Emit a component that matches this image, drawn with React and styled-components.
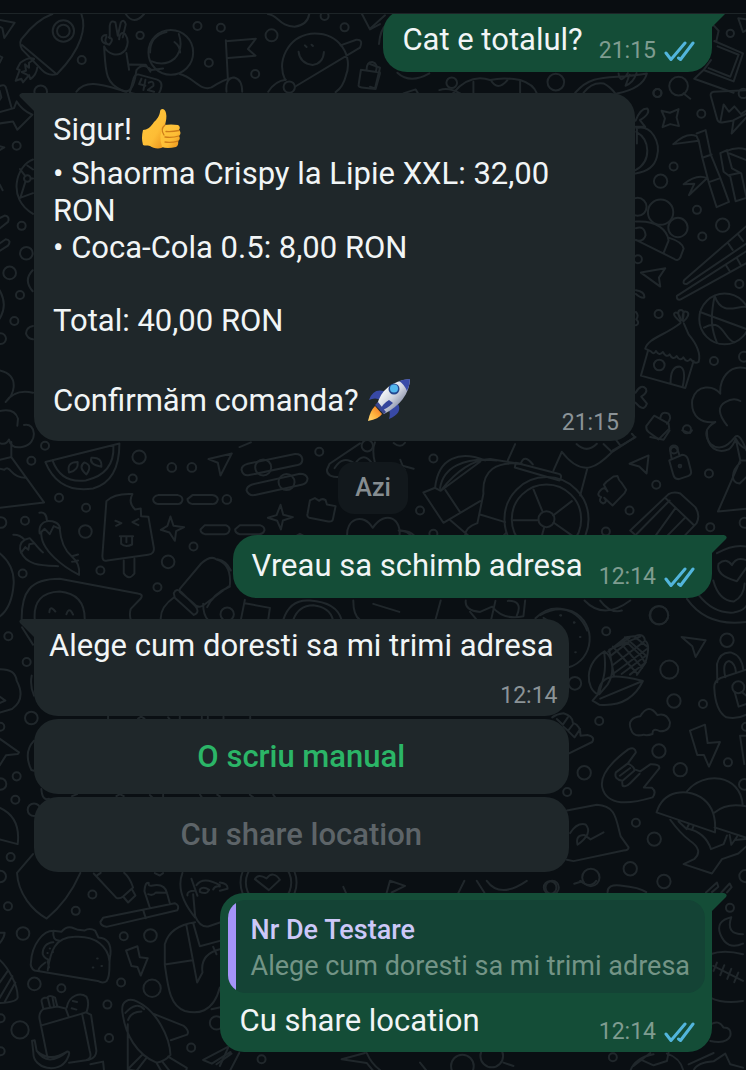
import React from 'react';
import styled, { createGlobalStyle, css } from 'styled-components';

const GlobalStyle = createGlobalStyle`
  *, *::before, *::after { box-sizing: border-box; }
  body {
    margin: 0;
    background: #0a0f13;
    color: #f1f5f6;
    font-family: Roboto, "Noto Sans", sans-serif;
  }
`;

const palette = {
  page: '#0a0f13',
  incoming: '#1f272a',
  outgoing: '#144d37',
  doodle: '#20272b',
};

const Screen = styled.div`
  position: relative;
  min-height: 100vh;
  overflow: hidden;
  background: ${palette.page};
`;

const WallpaperSvg = styled.svg`
  position: absolute;
  inset: 0;
  width: 100%;
  height: 100%;
  fill: none;
  stroke: ${palette.doodle};
  stroke-width: 6;
  stroke-linecap: round;
  stroke-linejoin: round;
`;

const TopBar = styled.header`
  position: relative;
  z-index: 2;
  height: 14px;
  background: #090d11;
  border-bottom: 1px solid #1d2427;
`;

const Conversation = styled.main`
  position: relative;
  z-index: 1;
  display: flex;
  flex-direction: column;
  gap: 21px;
  margin-top: -5px;
  padding: 0 34px 19px;
`;

const bubbleSurface = css`
  background: ${({ $out }) => ($out ? palette.outgoing : palette.incoming)};
  border-radius: ${({ $out }) => ($out ? '24px 0 24px 24px' : '0 24px 24px 24px')};
`;

const Bubble = styled.article`
  ${bubbleSurface}
  position: relative;
  display: flex;
  justify-content: space-between;
  align-self: ${({ $out }) => ($out ? 'flex-end' : 'flex-start')};
  gap: ${({ $out }) => ($out ? '16px' : '0')};
  max-width: calc(100% - 77px);
  padding: ${({ $out }) => ($out ? '12px 17px 9px 19px' : '10px 16px 6px 19px')};
`;

const StackedBubble = styled(Bubble)`
  flex-direction: column;
  gap: 2px;
  max-width: 100%;
  align-self: ${({ $out }) => ($out ? 'flex-end' : 'stretch')};
  padding: ${({ $out }) => ($out ? '7px 7px 7px 8px' : '8px 11px 8px 15px')};
`;

const TailSvg = styled.svg`
  position: absolute;
  top: 0;
  ${({ $out }) => ($out ? 'left: 100%;' : 'right: 100%;')}
  width: 15px;
  height: 18px;
  fill: ${({ $out }) => ($out ? palette.outgoing : palette.incoming)};
`;

const Text = styled.p`
  margin: 0;
  font-size: 31px;
  line-height: 37px;
`;

const PromptText = styled(Text)`
  padding-right: 4px;
`;

const EmojiLine = styled(Text)`
  display: flex;
  align-items: center;
  gap: 8px;
  height: 52px;
`;

const EmojiSvg = styled.svg`
  flex: none;
  width: 44px;
  height: 44px;
`;

const Items = styled.ul`
  margin: 0 0 36px;
  padding: 0;
  list-style: none;
  font-size: 31px;
  line-height: 37px;
`;

const Body = styled.div`
  min-width: 0;
  flex: 1;
  padding-bottom: 9px;
`;

const Total = styled(Text)`
  margin-bottom: 35px;
`;

const Meta = styled.footer`
  display: flex;
  align-items: center;
  align-self: flex-end;
  gap: 8px;
  flex: none;
  padding-top: 18px;
  font-size: 23px;
  line-height: 24px;
  color: ${({ $out }) => ($out ? '#7f9c90' : '#8b9397')};
`;

const TicksSvg = styled.svg`
  width: 31px;
  height: 21px;
  fill: none;
  stroke: #52b5dc;
  stroke-width: 3;
  stroke-linejoin: round;
  stroke-linecap: round;
`;

const DayChip = styled.div`
  align-self: center;
  padding: 12px 17px;
  border-radius: 16px;
  background: #12181c;
  color: #868d91;
  font-size: 25px;
  font-weight: 500;
  line-height: 28px;
`;

const Prompt = styled.section`
  display: flex;
  flex-direction: column;
  align-self: flex-start;
  gap: 3px;
`;

const ReplyButton = styled.button`
  height: 75px;
  border: 0;
  border-radius: 24px;
  background: ${palette.incoming};
  color: #2bb567;
  font: 500 31px/37px Roboto, "Noto Sans", sans-serif;
  cursor: pointer;

  &:disabled {
    color: #5d6468;
    cursor: default;
  }
`;

const Quote = styled.blockquote`
  position: relative;
  overflow: hidden;
  margin: 0;
  padding: 12px 15px 9px 23px;
  border-radius: 18px;
  background: #144335;

  &::before {
    content: "";
    position: absolute;
    inset: 0 auto 0 0;
    width: 8px;
    background: #a594f8;
  }
`;

const QuoteAuthor = styled.cite`
  display: block;
  color: #cdc8f8;
  font-size: 27px;
  font-style: normal;
  font-weight: 500;
  line-height: 36px;
`;

const QuoteText = styled.p`
  margin: 0;
  color: #739486;
  font-size: 27px;
  line-height: 36px;
`;

const ReplyRow = styled.div`
  display: flex;
  justify-content: space-between;
  padding: 7px 10px 1px 12px;
`;

const BubbleTail = ({ out }) => (
  <TailSvg $out={out} viewBox="0 0 15 18" aria-hidden="true">
    <path d={out ? 'M0 0H12Q16 1 14 4L0 18Z' : 'M15 0H3Q-1 1 1 4L15 18Z'} />
  </TailSvg>
);

const Ticks = () => (
  <TicksSvg viewBox="0 0 31 21" role="img" aria-label="Citit">
    <path d="M2 12L7 18.500L21 2M14.500 17L16.500 18.500L29 2" />
  </TicksSvg>
);

const Stamp = ({ time, out }) => (
  <Meta $out={out}>
    <time>{time}</time>
    {out && <Ticks />}
  </Meta>
);

const ThumbsUp = () => (
  <EmojiSvg viewBox="0 0 44 44" role="img" aria-label="Deget ridicat">
    <defs>
      <linearGradient id="skin" x1="0" y1="0" x2="1" y2="1">
        <stop offset="0" stopColor="#ffc83e" />
        <stop offset="0.6" stopColor="#fdbd35" />
        <stop offset="1" stopColor="#e88d18" />
      </linearGradient>
    </defs>
    <path d="M3 23C7 23 11 20 14 15C17 12 19 10 20 5C20 1 25 1 26 6C27 10 26 14 25 18L25 38C22 43 14 42 10 39C7 38 5 39 3 38Q1 31 3 23Z" fill="url(#skin)" />
    <path d="M24 18Q31 17 38 18Q41 20 39 23Q42 26 39 29Q41 32 38 34Q39 38 36 40Q27 42 22 40Q18 28 24 18Z" fill="url(#skin)" />
    <path d="M26 24.500Q32 25 39 23.500M25 30Q32 31 39 29M25 35Q31 36 38 34M25 18Q20 22 24 28" fill="none" stroke="#cf7d18" strokeWidth="1.300" strokeLinecap="round" />
  </EmojiSvg>
);

const Rocket = () => (
  <EmojiSvg viewBox="0 0 44 44" role="img" aria-label="Rachetă">
    <defs>
      <linearGradient id="hull" x1="0.2" y1="0.2" x2="0.8" y2="0.8">
        <stop offset="0" stopColor="#ffffff" />
        <stop offset="0.5" stopColor="#cfd3de" />
        <stop offset="1" stopColor="#777f9c" />
      </linearGradient>
      <linearGradient id="flame" x1="1" y1="0" x2="0" y2="1">
        <stop offset="0" stopColor="#f06b1d" />
        <stop offset="0.6" stopColor="#ffb740" />
        <stop offset="1" stopColor="#ffd879" />
      </linearGradient>
    </defs>
    <path d="M17 13Q6 10 2 22Q8 19 14 22ZM31 26Q36 35 22 41Q24 35 21 30Z" fill="#3849a5" />
    <path d="M8 28L15 36Q12 41 1 43Q3 33 8 28Z" fill="url(#flame)" />
    <path d="M10 27Q16 4 43 1Q42 23 17 36Z" fill="url(#hull)" />
    <path d="M32 3Q38 1 43 1Q43 7 40 13Q37 6 32 3Z" fill="#394ba8" />
    <path d="M8 27L17 36L19 34L11 24Z" fill="#3a468e" />
    <path d="M22 22Q15 26 13 33Q20 31 26 25Z" fill="#35459c" />
    <circle cx="27" cy="11" r="5.500" fill="#24478f" />
    <circle cx="27" cy="10.500" r="4" fill="#53b8ee" />
  </EmojiSvg>
);

/* Each patch holds doodles drawn at three times their size around an origin. */
const patches = [
  {
    x: 0, y: 0,
    dots: [[246, 180, 12], [421, 106, 11], [593, 78, 12], [663, 83, 12], [627, 188, 12], [766, 222, 12], [815, 106, 18], [974, 48, 12], [1034, 82, 12], [191, 93, 32], [191, 93, 19], [513, 157, 67], [123, 275, 19], [868, 261, 17], [51, 437, 12]],
    paths: [
      'M0 60L45 68L14 114L8 84L0 80M0 168L8 172L0 188',
      'M245 42C260 80 248 145 172 222Q145 230 125 208L67 148Q55 125 70 112Q110 60 158 42M67 135L170 222',
      'M103 176Q85 170 62 188L52 207L60 210L48 242L65 236L70 247L88 225L92 237Q110 225 113 202M103 178L88 188L88 203L76 193L79 212L66 216L82 224',
      'M330 115L330 77Q333 58 347 67L354 107L363 68Q373 55 378 73L369 112M320 105C300 105 303 126 318 131M327 112Q345 115 329 134Q311 130 320 110M358 118Q360 92 376 102Q391 124 377 150C355 174 325 163 313 139C318 210 315 250 366 270Q400 290 410 210Q430 186 455 210L490 205M380 159L388 209M388 193L438 194L452 215',
      'M415 223L470 238Q492 244 482 270L470 296L390 278L400 240Q404 222 415 223ZM425 236L418 252L437 257M437 239L431 270M447 248Q463 239 461 257L444 270L463 275',
      'M456 184Q495 200 525 175Q552 145 537 102M500 96Q450 108 451 157M524 126Q540 138 541 157M230 275C260 235 310 255 380 275M540 222C580 230 600 275 635 262Q670 238 700 232M678 121L684 235M678 124L768 116L744 147L767 167L685 174M680 275Q676 234 703 232Q727 237 727 275',
      'M378 42Q402 78 433 42M804 42C835 45 840 80 884 80Q923 75 928 42M856 240C830 185 862 112 932 101C1022 94 1060 172 1038 226Q1030 260 1007 276M805 275Q826 242 858 239M885 260L1080 143Q1091 117 1069 119L1022 136M896 155Q900 190 938 195Q970 190 972 156M915 136L920 141M935 134L939 138M1086 42L1110 88L1140 72',
      'M1083 209L1140 217M1083 209L1076 254Q1074 261 1085 262L1127 267L1140 220M1100 209Q1100 185 1117 186Q1135 190 1128 215',
      'M0 258Q17 250 20 266L35 321M0 272L5 292L0 300M0 370L40 364L53 389L98 344Q67 330 51 304L43 324L0 336',
    ],
  },
  {
    x: 370, y: 0,
    dots: [[557, 246, 25], [925, 258, 28], [861, 279, 12], [1080, 100, 11], [245, 248, 16]],
    paths: [
      'M0 86L45 46M27 132Q30 90 50 72M82 218Q120 253 178 220M0 260L15 265L30 203L0 192M100 280L137 268L150 290',
      'M208 270Q235 260 270 280M250 278Q300 220 360 240Q400 230 450 240Q490 252 500 280M310 245V278M450 240V278M362 240Q382 275 412 240',
      'M615 278C670 215 720 240 830 220Q818 265 740 280M640 278Q665 245 700 250Q720 260 735 280M745 220Q750 255 773 219M778 224L766 257Q790 248 799 219',
      'M1030 76L1045 92L1038 124M1104 55L1128 58M1104 55L1118 96L1128 90M1032 123L1118 160L1090 244L1000 210L1022 180M1042 139L1105 164L1080 230L1015 204M1000 210L972 236L1090 278M940 280L960 296',
    ],
  },
  {
    x: 540, y: 90,
    dots: [[352, 9, 12], [483, 71, 12], [400, 229, 12], [361, 273, 20], [470, 359, 12], [547, 405, 20], [486, 439, 12], [293, 507, 12], [597, 581, 12], [355, 671, 12], [521, 812, 12], [357, 824, 16], [440, 1017, 12], [361, 366, 38], [413, 412, 29], [553, 686, 76], [292, 350, 27], [611, 799, 15], [609, 10, 14], [401, 1077, 12]],
    paths: [
      'M364 62L389 68L415 57L409 82L416 108L390 102L367 111L374 85ZM286 92Q300 54 321 55Q333 69 299 90L315 110L286 110M288 114C335 102 362 158 350 200Q340 242 286 250M288 125C330 148 335 213 286 240M290 115V160',
      'M620 0L520 5Q508 8 512 20L530 85Q533 98 545 97L580 91M540 96L550 43L566 65L582 49L602 72L620 60M618 82L574 130L580 90L620 70',
      'M399 162Q440 125 469 138L475 152L399 162M469 130L496 120L511 192L540 263L566 335L529 351L506 279L486 203L475 150M486 203L514 193M506 276L540 264M430 282Q470 250 500 264L446 315L462 281L430 282M540 189L560 180L575 235L603 250L618 320M540 189L550 245L570 260L586 333L618 323M557 183Q590 168 618 178M568 190L618 210M565 255L600 248',
      'M287 394C350 390 381 420 385 451Q377 470 371 486M287 449L400 505Q412 515 420 502L430 475Q426 455 387 443M287 414Q313 405 316 435Q310 456 287 450M302 547L375 534L356 562L360 589ZM287 600Q315 605 312 622Q302 624 287 611M287 665Q297 675 288 687Q300 700 287 705',
      'M618 408L432 569Q425 583 440 581L618 460M618 483L410 617Q408 630 420 628L618 519M564 460L577 479M594 433L608 452M557 525L567 541M590 504L600 522',
      'M479 665L618 716M523 617C508 690 515 720 530 758M523 617C545 680 590 645 618 650M491 712C550 680 550 750 583 756',
      'M421 695Q393 672 405 667Q415 664 422 690Q406 660 422 659Q435 660 427 690Q426 657 440 665Q452 672 429 694M421 698C375 735 322 744 315 775L332 783Q342 795 347 782Q357 798 368 785Q378 804 388 792Q398 812 409 797Q420 815 429 801Q440 820 450 806Q462 822 475 815Q485 780 445 732L431 700M323 782L302 856L435 893L460 812M391 880Q390 827 419 829Q439 836 427 890',
      'M286 907Q303 879 317 895Q323 907 303 919L320 940Q313 960 298 949L286 937M342 976L318 1007Q317 1019 325 1025L355 1047L387 1015L385 1000ZM360 983Q364 960 385 970Q397 982 380 1000',
      'M618 834C565 820 537 868 540 910C520 885 470 880 456 928C450 980 485 1000 525 995M618 1080Q598 1025 584 1040Q544 1090 510 1060Q480 1020 525 995M560 1005Q520 955 555 935Q580 920 600 932M286 1040L218 1080',
    ],
  },
  {
    x: 0, y: 370,
    dots: [[136, 226, 12], [95, 271, 12], [418, 260, 20], [516, 291, 13], [576, 291, 13], [399, 324, 12], [178, 382, 12], [259, 412, 12], [76, 451, 12], [257, 483, 19], [681, 387, 13], [581, 528, 12], [69, 609, 12], [302, 600, 12], [505, 574, 19], [473, 650, 12], [682, 731, 20], [790, 291, 24], [860, 335, 24], [958, 244, 12], [1102, 226, 17], [4, 456, 16], [26, 797, 12]],
    paths: [
      'M0 0Q45 10 42 50Q40 75 18 95M18 95Q45 55 100 67M0 122Q45 112 55 145L53 166M73 164C110 155 116 220 70 229Q35 237 28 207Q20 225 0 218M35 215V260L133 396L0 412M0 268L35 260M0 295L14 298Q24 288 34 302Q52 323 80 322',
      'M137 275L359 219C359 290 333 339 280 354Q176 370 137 275ZM158 269Q184 340 258 330Q345 310 341 226M208 306Q200 275 234 275Q237 300 208 306ZM260 312Q234 290 254 276Q280 285 260 312ZM305 289Q267 282 275 262Q307 259 305 289Z',
      'M626 266L696 249L662 315L654 277ZM744 280L885 251Q904 250 907 265Q909 280 893 284L748 314Q729 318 725 298Q725 285 744 280ZM757 342L900 310Q919 310 923 324Q922 339 908 342L769 373Q747 379 740 360Q740 348 757 342Z',
      'M475 374H534Q548 377 548 388Q546 400 534 401H475Q461 399 460 387Q462 376 475 374ZM578 374H637Q653 376 654 387Q651 400 638 401H578Q563 399 563 386ZM615 464H678Q691 470 689 478Q687 490 674 491H615Q602 487 602 477ZM720 464H780Q794 468 794 479Q790 491 778 491H720Q705 488 706 476Z',
      'M512 438L521 466L553 470L529 482L525 511L509 486L483 478L503 466ZM842 403L850 433L879 440L849 450L843 477L832 451L804 442L830 434ZM930 390L945 383L958 391Q966 382 977 389L981 402L1007 407L999 446Q998 455 985 453L928 442Q920 439 923 429Z',
      'M398 371Q345 368 320 392L308 555Q307 574 323 570L445 553Q465 550 462 531L446 439L424 437L423 414L406 417Q384 396 398 371ZM372 570V608Q387 632 404 609V565M347 451L365 458L349 466M416 446L398 455L416 464M360 497H400M364 501V520Q377 532 397 522V500M380 501V515',
      'M119 427Q140 422 142 452C128 455 116 467 120 489L135 475L150 491L162 467L181 475C180 456 160 451 142 452M125 485C120 540 198 593 238 613Q242 580 217 559Q184 530 180 474M41 493Q60 492 75 508C62 516 58 529 64 547L77 530L86 538L89 521L104 518L90 503L75 508M63 543C80 585 125 585 175 587M104 518Q120 538 130 546M217 557L235 552M217 574L235 570',
      'M0 548Q45 585 42 640Q37 710 0 738M66 748C65 665 90 625 180 625L414 669Q432 671 423 684L393 715Q388 730 393 748M105 745Q100 666 180 663Q255 670 255 745M149 725Q151 702 167 723M200 731Q208 706 220 732',
      'M540 655L604 579Q633 553 650 567Q696 580 690 645L610 705Q595 715 582 699L540 664ZM522 668Q530 650 545 665L586 706Q602 725 582 733L525 682ZM652 566Q680 570 693 600M523 680Q480 710 483 748M610 700Q610 735 625 748M690 648Q640 670 622 710M735 688L723 748M735 698L810 712L805 748M850 748Q870 685 930 690Q1010 695 1025 748M880 748Q895 705 940 704Q990 710 999 748',
      'M719 230L753 216M1019 320Q980 320 981 298L989 280L1080 219M1004 293Q1029 252 1065 280Q1092 240 1118 281M1125 216Q1115 238 1125 277M1181 218Q1202 235 1215 217M1201 268L1208 286L1241 295M1042 500C1036 444 1090 425 1118 472C1158 415 1207 446 1198 500M1196 480Q1225 480 1235 500M883 500L900 490L918 500M1060 690Q1060 735 1080 748M1120 700L1198 724',
    ],
  },
  {
    x: 400, y: 430,
    dots: [[100, 84, 12], [60, 240, 12], [100, 310, 12], [768, 163, 12], [926, 129, 12], [688, 240, 12], [617, 303, 12], [930, 290, 12], [777, 554, 27], [439, 266, 126], [439, 266, 104], [439, 266, 24], [839, 107, 4], [1033, 277, 15]],
    paths: [
      'M105 172C115 80 180 60 255 90M120 173C130 110 190 80 290 90M105 172L122 181L240 94M122 181C170 120 220 88 270 86L365 101C290 90 245 120 250 190L232 278M105 172L70 186L130 277L240 212M136 179L180 245M151 269L207 317M232 278Q195 290 195 317M240 252L315 275M318 307L309 317',
      'M347 97L472 129Q490 132 478 150L344 111ZM363 97Q373 70 398 102M460 120L485 64C550 150 600 100 634 66M562 112L540 195M339 269L414 269M400 177L427 243M459 255L515 212M460 276L517 316M432 291L424 320M529 41Q560 70 590 40M610 41L635 65L704 20L695 10M645 25L660 45M750 20L790 28L808 0M846 0L869 8L875 0',
      'M688 100L745 75L739 129L717 108ZM807 90L846 73Q859 74 863 86L872 121Q875 133 863 137L836 146Q822 147 818 129ZM814 83Q804 51 822 49Q831 51 837 73M640 138L652 137Q655 150 664 157L678 178L673 188L637 225L612 202Q623 214 609 219Q593 213 603 200Q590 196 597 184Q613 164 622 183L611 163L619 154Z',
      'M690 300L805 191Q820 183 840 189L885 230Q901 254 889 278L852 317M690 300L710 317M797 204L882 285M710 310L808 210M765 317L826 232M800 317L853 263M345 41L323 90M0 105L14 118',
      'M920 0C918 55 953 70 985 57Q1000 45 1006 24Q1020 50 1038 55M1006 24L1020 90L953 243L1038 235M1020 90H1038M1020 97C993 120 989 158 1018 159L1038 140M0 300Q30 300 45 318M950 368Q1000 340 1038 348M955 400Q978 380 995 404Q1007 377 1038 389M955 400Q945 435 1010 452L1038 412M860 505Q920 590 1038 574M895 493Q940 550 1000 546Q1030 540 1038 526M939 450Q955 510 1000 513Q1030 500 1033 459',
      'M106 568L122 510M197 510Q193 540 240 544L276 528Q310 570 370 557L375 510M210 544L230 568M286 511L273 568M323 511Q370 510 350 555M553 510Q610 570 690 510M600 510Q630 550 665 540M406 563C460 510 535 535 561 600M480 554H482M521 576H523',
    ],
  },
  {
    x: 540, y: 600,
    dots: [[356, 44, 28], [198, 92, 12], [560, 119, 20], [387, 207, 27], [104, 248, 19], [401, 301, 20], [488, 310, 12], [177, 361, 12], [356, 451, 20], [132, 516, 20], [420, 507, 20], [563, 485, 12], [81, 574, 12], [287, 666, 12], [342, 715, 20], [152, 830, 26], [270, 804, 20], [371, 842, 20], [36, 860, 20], [594, 260, 18], [615, 826, 18], [617, 378, 12], [612, 551, 16]],
    paths: [
      'M85 200C160 180 175 70 95 32Q48 15 0 44M10 52L22 59M61 45H63M101 66H103M119 109H121M105 155H107',
      'M157 300L173 281C137 265 130 190 193 152C225 175 220 224 202 252L177 281M173 281C180 210 240 225 308 241Q270 320 177 312L157 300M192 155C200 220 187 235 178 275M307 241L180 294M221 223L207 147L260 125L302 165L315 188L290 223M204 153L257 110L286 106Q312 97 314 120Q333 130 315 188M218 138L292 220M240 126L306 202M254 110L317 165M281 107L321 138M208 168L270 120L300 108M218 193L313 122M218 220L320 145M244 220L315 167M219 141L268 112M269 222L317 185',
      'M424 109L496 119L466 169L456 137ZM531 245L530 190Q540 152 573 156Q604 165 609 207M555 230Q545 185 566 181Q585 187 587 216M618 207L541 232Q521 240 522 262Q525 330 558 350Q590 357 618 342M583 274L595 318L618 310M604 274L618 285',
      'M310 402Q280 410 273 388C260 360 280 350 300 347Q325 305 351 343Q379 335 389 364Q391 390 360 392Q335 380 337 400Q320 406 310 402M449 390L494 372L502 427L539 424L506 498L491 463H471ZM618 405H599L612 490',
      'M36 350Q50 340 70 338Q97 346 98 366Q122 375 121 405L142 403Q166 408 156 424L85 459M50 355L68 372L83 350M70 378L84 390L99 370M85 392L103 410L120 385',
      'M186 560C178 520 218 480 264 446Q285 437 287 455L263 488L227 515Q220 535 246 540M263 488Q285 500 282 510L246 541M246 545L247 555Q259 560 268 549L298 519M283 506L300 512L330 491Q360 490 357 503L311 560L335 561Q350 573 337 590C270 610 200 618 186 560M239 525L270 502',
      'M80 629L170 612C228 615 227 655 241 706L265 740Q266 748 250 749L100 781L80 777M90 697Q110 665 136 671Q160 697 112 732Q105 702 133 703L151 716L190 695M102 849L124 842',
      'M349 635C370 565 440 565 481 589Q530 620 524 695L349 635ZM440 572C490 510 600 520 607 612M523 635Q560 605 618 617M523 680L618 711M390 657Q420 698 449 720Q490 748 463 774L430 790L515 818L545 775L594 758L618 737M415 662L439 685L445 672M443 684Q495 695 512 745L550 730L560 704M455 688L460 675M568 703L573 732L590 708M584 718L617 715M202 874Q202 850 240 854Q300 860 318 874M497 875L530 845L534 858L515 874M543 875L568 848L574 859L560 875',
    ],
  },
  {
    x: 0, y: 600,
    dots: [[81, 184, 12], [95, 352, 19], [51, 527, 12], [47, 597, 12], [33, 769, 12], [2, 378, 12], [3, 550, 17], [103, 627, 19], [2, 827, 17], [806, 845, 84], [806, 845, 68]],
    paths: [
      'M67 80L100 132M0 206Q47 205 51 240Q80 295 37 325L0 336M0 288L17 300L0 307M0 414L58 455L54 460L19 464L0 494M103 420Q70 455 95 508L103 510M96 225Q90 255 103 285M0 621Q64 650 54 730L0 716M125 565Q128 602 148 594M325 347V357M415 354L424 348L434 354M505 350L510 356M540 348V357M606 348V357M624 348V357M671 348V357M751 348V357M217 586L232 580M350 586L360 580L372 586M450 583L458 590M490 582V589M601 582L606 590M652 582L660 587M750 582L760 590M820 582L826 590',
      'M765 835Q775 817 800 833Q820 808 840 837L807 868Z',
    ],
  },
  {
    x: 0, y: 850,
    dots: [[278, 131, 12], [25, 166, 12], [228, 180, 12], [70, 248, 19], [372, 256, 12], [452, 254, 19], [104, 399, 19], [185, 412, 12], [364, 395, 12], [457, 412, 26], [323, 461, 12], [61, 537, 26], [328, 561, 12], [574, 590, 12], [3, 502, 12], [3, 601, 12], [650, 516, 20]],
    paths: [
      'M100 10L52 66C55 130 100 180 141 203Q205 150 242 66M282 68L350 141Q360 145 370 137L400 110Q390 80 373 66M293 73L303 66M370 137L385 155L407 134L397 116M465 67L480 74L490 67',
      'M310 201L525 157Q540 163 533 178L320 228Q302 225 302 213ZM431 180L438 202M450 170L434 121Q436 92 447 96Q444 108 459 104C490 98 500 115 502 128L511 160M445 130Q460 136 468 125L498 126',
      'M94 333C97 280 130 240 161 240L185 243Q200 225 216 230L235 237L254 239Q270 230 286 239L296 260Q337 263 332 312C325 340 335 370 321 390Q310 399 294 390L105 359Q90 350 94 333M144 358C153 300 165 260 224 258C290 253 325 290 329 330M161 240Q158 270 178 269M161 274C140 275 128 290 129 310Q135 325 150 327M137 335Q110 355 119 360M144 331L148 350M150 293H151M143 306H144M159 303H160M292 323H294M305 345H307M279 350H281',
      'M0 246H15Q14 260 0 277M0 327C25 350 55 400 54 440Q50 455 0 456M25 359L0 395M38 376L0 441M47 395L15 453M379 299L413 286L420 319L444 322L423 374L413 348L395 345Z',
      'M126 453Q123 440 142 440Q150 431 166 440L173 467L131 474ZM144 440L151 468M158 437L163 466M131 474Q114 487 121 510L144 623M173 467L198 473L206 495M201 470C208 430 243 425 260 437Q270 455 261 482M219 450L232 453M216 472L230 476M123 524L247 488L259 484L274 492L290 600Q289 620 269 626L208 635M247 488L270 600Q278 623 259 628M105 568L111 600C135 620 160 627 202 602Q215 600 202 625C178 670 100 655 101 605L97 569ZM111 599Q144 650 202 602',
      'M369 490C360 447 390 440 414 453C470 480 510 557 512 612Q495 632 470 635C410 610 377 550 369 490ZM377 486Q410 450 433 475M385 507Q393 483 425 482M462 489L552 525Q570 540 562 551L513 568M384 520V655L429 610M384 655L410 660L440 621M470 635L483 658M487 631L508 658M505 617L561 651L559 660M272 640L310 632L313 660',
      'M548 66Q525 125 586 200M575 84L593 135M563 134Q560 120 585 120M580 130L586 196Q600 230 625 227L660 215M600 116Q610 105 628 117Q620 133 600 123ZM640 116Q645 104 660 107M590 103Q610 75 660 103M586 214Q510 225 495 280V341C505 410 510 465 555 480C590 490 640 488 660 410M495 341L578 328M559 220L592 395L608 365Q600 310 660 295M580 216L600 286L660 270M640 288L650 310M635 475L662 469M610 627L690 585M610 627L636 638L692 603M650 640L695 608',
    ],
  },
  {
    x: 220, y: 880,
    dots: [[990, 20, 19], [1529, 81, 12], [1178, 529, 12], [125, 535, 12], [727, 555, 34], [815, 525, 34]],
    paths: [
      'M0 5Q25 8 23 24L0 30M370 18L378 36M500 36L510 0L555 15L515 35M715 36L733 0M770 0L793 36M800 0Q840 55 920 0M1080 0Q1110 25 1128 0',
      'M1533 109Q1485 120 1500 160Q1520 210 1568 188M1533 109Q1515 160 1568 160M1470 220Q1510 205 1568 220M1470 350Q1510 370 1568 360M1479 255L1568 300M1490 245L1480 270M1512 253L1500 283M1533 264L1521 294M1554 275L1542 304M1472 430Q1495 415 1510 440Q1535 440 1530 465Q1520 490 1470 480',
      'M0 555L25 500M58 516L30 570M365 535L435 516M365 535L440 546L460 570M440 516Q455 550 480 567M600 545L620 570M850 545L880 555M1240 555L1290 516M1230 570Q1245 530 1300 520M1260 535L1300 553L1340 540L1345 515M1340 518Q1380 530 1390 570M1405 550L1480 516M1420 568Q1430 545 1480 541L1515 518L1530 550L1568 560',
    ],
  },
  {
    x: 0, y: 90,
    dots: [[66, 407, 12], [80, 489, 19], [30, 548, 19], [61, 614, 12], [44, 692, 12], [3, 745, 16], [83, 265, 10]],
    paths: [
      'M0 168L14 172L0 180M0 283L9 300M100 208C50 225 20 325 100 371M83 226L100 238M61 237L77 258M77 275L62 323M61 323L100 309M93 265H100M0 384L15 376Q31 378 25 395L0 415M0 460L18 447Q37 450 25 466L0 482M0 600Q25 645 0 685M99 540Q70 570 99 603M100 707Q80 710 79 730Q84 745 100 747',
    ],
  },
];

const Wallpaper = () => (
  <WallpaperSvg viewBox="0 0 746 1070" preserveAspectRatio="xMidYMin slice" aria-hidden="true">
    {patches.map((patch, p) => (
      <g key={p} transform={`translate(${patch.x} ${patch.y}) scale(0.3333)`}>
        {patch.dots.map(([cx, cy, r], i) => (
          <circle key={i} cx={cx} cy={cy} r={r} />
        ))}
        {patch.paths.map((d, i) => (
          <path key={i} d={d} />
        ))}
      </g>
    ))}
  </WallpaperSvg>
);

export default function App() {
  return (
    <Screen>
      <GlobalStyle />
      <Wallpaper />
      <TopBar />
      <Conversation>
        <Bubble $out>
          <BubbleTail out />
          <Text>Cat e totalul?</Text>
          <Stamp time="21:15" out />
        </Bubble>

        <Bubble>
          <BubbleTail />
          <Body>
            <EmojiLine>
              Sigur! <ThumbsUp />
            </EmojiLine>
            <Items>
              <li>• Shaorma Crispy la Lipie XXL: 32,00 RON</li>
              <li>• Coca-Cola 0.5: 8,00 RON</li>
            </Items>
            <Total>Total: 40,00 RON</Total>
            <EmojiLine>
              Confirmăm comanda? <Rocket />
            </EmojiLine>
          </Body>
          <Stamp time="21:15" />
        </Bubble>

        <DayChip>Azi</DayChip>

        <Bubble $out>
          <BubbleTail out />
          <Text>Vreau sa schimb adresa</Text>
          <Stamp time="12:14" out />
        </Bubble>

        <Prompt>
          <StackedBubble>
            <BubbleTail />
            <PromptText>Alege cum doresti sa mi trimi adresa</PromptText>
            <Stamp time="12:14" />
          </StackedBubble>
          <ReplyButton type="button">O scriu manual</ReplyButton>
          <ReplyButton type="button" disabled>Cu share location</ReplyButton>
        </Prompt>

        <StackedBubble $out>
          <BubbleTail out />
          <Quote>
            <QuoteAuthor>Nr De Testare</QuoteAuthor>
            <QuoteText>Alege cum doresti sa mi trimi adresa</QuoteText>
          </Quote>
          <ReplyRow>
            <Text>Cu share location</Text>
            <Stamp time="12:14" out />
          </ReplyRow>
        </StackedBubble>
      </Conversation>
    </Screen>
  );
}
